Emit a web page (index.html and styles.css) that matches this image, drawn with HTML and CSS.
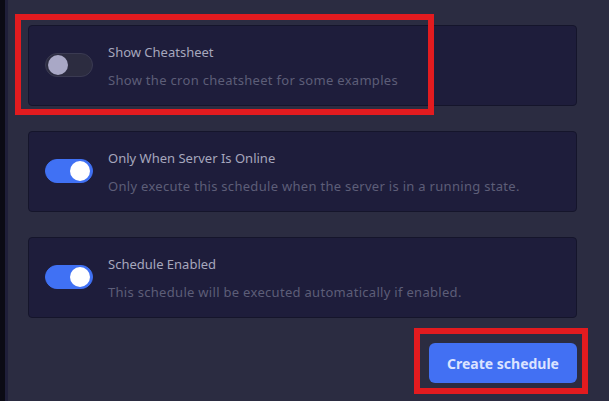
FILE: index.html
```html
<!DOCTYPE html>
<html>
<head>
<meta charset="utf-8">
<link rel="stylesheet" href="styles.css">
</head>
<body>
<div class="frame">
  <div class="edge"></div>
  <main class="panel">
    <div class="card">
      <span class="toggle"><span class="thumb"></span></span>
      <div class="text">
        <div class="title">Show Cheatsheet</div>
        <div class="desc">Show the cron cheatsheet for some examples</div>
      </div>
    </div>
    <div class="card">
      <span class="toggle on"><span class="thumb"></span></span>
      <div class="text">
        <div class="title">Only When Server Is Online</div>
        <div class="desc">Only execute this schedule when the server is in a running state.</div>
      </div>
    </div>
    <div class="card">
      <span class="toggle on"><span class="thumb"></span></span>
      <div class="text">
        <div class="title">Schedule Enabled</div>
        <div class="desc">This schedule will be executed automatically if enabled.</div>
      </div>
    </div>
    <div class="actions">
      <button class="btn">Create schedule</button>
    </div>
  </main>
  <div class="highlight hl-card"></div>
  <div class="highlight hl-btn"></div>
</div>
</body>
</html>
```
FILE: styles.css
```css
html, body {
  margin: 0;
  padding: 0;
  width: 609px;
  height: 401px;
  overflow: hidden;
  background: #2b2c41;
  font-family: "Noto Sans", "Open Sans", sans-serif;
}
.frame {
  position: relative;
  display: flex;
  height: 401px;
}
.edge {
  width: 5px;
  flex: none;
  background: #0b0b15;
  border-right: 3px solid #1f1f3a;
}
.panel {
  flex: 1;
  padding: 25px 32px 0 20px;
  display: flex;
  flex-direction: column;
  gap: 25px;
}
.card {
  height: 79px;
  box-sizing: content-box;
  border: 1px solid #15152b;
  border-radius: 4px;
  background: #1e1d3b;
  display: flex;
  align-items: center;
  padding: 0 16px;
  gap: 15px;
}
.toggle {
  position: relative;
  flex: none;
  width: 46px;
  height: 22px;
  border-radius: 12px;
  background: #2c2c40;
  border: 1px solid #3a3a52;
  margin-top: -2px;
}
.toggle .thumb {
  position: absolute;
  left: 2px;
  top: 1px;
  width: 20px;
  height: 20px;
  border-radius: 50%;
  background: #a9a8c6;
}
.toggle.on {
  background: #4071f4;
  border-color: #4071f4;
}
.toggle.on .thumb {
  left: auto;
  right: 2px;
  background: #ffffff;
}
.text {
  display: flex;
  flex-direction: column;
  gap: 11px;
  margin-top: 2px;
}
.title {
  font-size: 13px;
  line-height: 17px;
  color: #a6a7bd;
}
.desc {
  font-size: 13px;
  line-height: 17px;
  letter-spacing: 0.3px;
  color: #5d5e78;
}
.actions {
  display: flex;
  justify-content: flex-end;
}
.btn {
  width: 148px;
  height: 40px;
  border: none;
  border-radius: 6px;
  background: #4270f3;
  color: #dbe3ff;
  font-family: "Noto Sans", "Open Sans", sans-serif;
  font-size: 14px;
  font-weight: 700;
  padding: 0;
}
.highlight {
  position: absolute;
  border: 6px solid #e21b1f;
  box-sizing: border-box;
}
.hl-card {
  left: 15px;
  top: 14px;
  width: 419px;
  height: 101px;
}
.hl-btn {
  left: 414px;
  top: 328px;
  width: 174px;
  height: 66px;
}
```
